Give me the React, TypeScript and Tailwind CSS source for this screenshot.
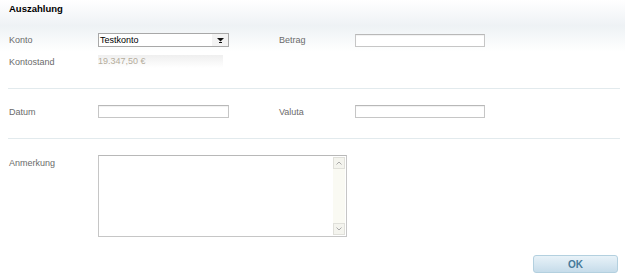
import React from "react";

function TextField({ width }: { width: string }) {
  return (
    <div
      className={`${width} h-[13px] border border-[#c6c6c6] border-t-[#b8b8b8] bg-white shadow-[inset_0_1px_1px_rgba(0,0,0,0.06)]`}
    />
  );
}

function Label({ children, className = "" }: { children: React.ReactNode; className?: string }) {
  return <div className={`text-[9px] leading-[12px] text-[#6b6b6b] ${className}`}>{children}</div>;
}

export default function App() {
  return (
    <div
      className="w-[625px] h-[278px] overflow-hidden bg-[linear-gradient(to_bottom,#ffffff_0px,#eef2f5_26px,#ffffff_52px)]"
      style={{ fontFamily: '"Liberation Sans", Arial, sans-serif' }}
    >
      <div className="h-[33px] pl-[9px] pt-[3px]">
        <h1 className="text-[9.5px] leading-[12px] font-bold text-black">Auszahlung</h1>
      </div>

      <div className="flex h-[14px] items-center">
        <Label className="w-[98px] pl-[9px]">Konto</Label>
        <div className="flex h-[14px] w-[131px] items-center border border-[#a8a8a8] bg-white">
          <span className="flex-1 pl-[1px] text-[9px] leading-[12px] text-black">Testkonto</span>
          <div className="flex h-full w-[16px] items-center justify-center bg-[#f3f3f3]">
            <svg width="7" height="5" viewBox="0 0 7 5">
              <path d="M0 0h7L3.5 3.5z" fill="#111" />
              <rect x="2" y="4" width="3" height="1" fill="#111" />
            </svg>
          </div>
        </div>
        <Label className="ml-[50px] w-[76px]">Betrag</Label>
        <TextField width="w-[130px]" />
      </div>

      <div className="mt-[8px] flex h-[13px] items-center">
        <Label className="w-[98px] pl-[9px]">Kontostand</Label>
        <div className="h-[13px] w-[125px] bg-[linear-gradient(to_bottom,#efefef,#ffffff)] text-[9px] leading-[13px] text-[#b5ad9c]">
          19.347,50 €
        </div>
      </div>

      <div className="ml-[8px] mr-[5px] mt-[20px] h-px bg-[#e2eaed]" />

      <div className="mt-[16px] flex h-[13px] items-center">
        <Label className="w-[98px] pl-[9px]">Datum</Label>
        <TextField width="w-[131px]" />
        <Label className="ml-[50px] w-[76px]">Valuta</Label>
        <TextField width="w-[130px]" />
      </div>

      <div className="ml-[8px] mr-[5px] mt-[20px] h-px bg-[#e2eaed]" />

      <div className="mt-[16px] flex">
        <Label className="mt-[2px] w-[98px] pl-[9px]">Anmerkung</Label>
        <div className="flex h-[82px] w-[249px] border border-[#c6c6c6] border-t-[#b8b8b8] bg-white">
          <textarea className="flex-1 resize-none bg-transparent outline-none" />
          <div className="my-[1px] mr-[1px] flex w-[12px] flex-col justify-between bg-[#fafaf3]">
            <div className="flex h-[12px] items-center justify-center border border-[#e0e0da] bg-[#f4f4ee]">
              <svg width="6" height="4" viewBox="0 0 6 4">
                <path d="M0.5 3.5L3 1l2.5 2.5" fill="none" stroke="#aaa" strokeWidth="1" />
              </svg>
            </div>
            <div className="flex h-[12px] items-center justify-center border border-[#e0e0da] bg-[#f4f4ee]">
              <svg width="6" height="4" viewBox="0 0 6 4">
                <path d="M0.5 0.5L3 3l2.5-2.5" fill="none" stroke="#aaa" strokeWidth="1" />
              </svg>
            </div>
          </div>
        </div>
      </div>

      <div className="mt-[18px] flex">
        <button className="ml-[533px] flex h-[18px] w-[85px] items-center justify-center rounded-[3px] border border-[#b3d0df] bg-[linear-gradient(to_bottom,#e8f2f8,#c6dcea)] text-[10px] font-semibold text-[#467a9a]">
          OK
        </button>
      </div>
    </div>
  );
}
